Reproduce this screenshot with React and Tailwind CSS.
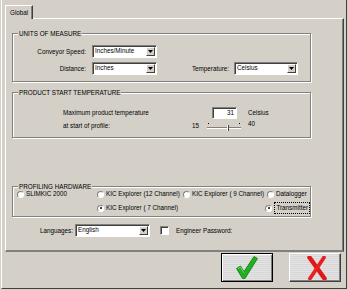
import React from 'react';

const Select = ({ value, className }) => (
  <div className={`flex h-[13px] items-center bg-white border border-[#808080] border-r-white border-b-white shadow-[inset_1px_1px_0_#404040] ${className}`}>
    <span className="flex-1 pl-[2px] leading-none">{value}</span>
    <span className="mr-px flex h-[9px] w-[9px] items-center justify-center border border-white border-r-[#404040] border-b-[#404040] bg-[#d4d0c8]">
      <svg width="5" height="3" viewBox="0 0 5 3">
        <path d="M0 0h5L2.5 3z" fill="#000" />
      </svg>
    </span>
  </div>
);

const Radio = ({ checked, label, className, focus }) => (
  <div className={`flex items-center ${className}`}>
    <span className="flex h-[7px] w-[7px] items-center justify-center rounded-full border border-[#808080] border-r-white border-b-white bg-white">
      {checked && <span className="h-[2px] w-[2px] rounded-full bg-black" />}
    </span>
    <span className={`ml-[2px] leading-none ${focus ? 'border border-dotted border-black px-px py-[2px]' : ''}`}>{label}</span>
  </div>
);

const Group = ({ title, className, children }) => (
  <div className={`relative ml-[6px] w-[299px] border border-[#808080] shadow-[inset_1px_1px_0_#fff,1px_1px_0_#fff] ${className}`}>
    <span className="absolute left-[5px] top-[-4px] bg-[#d4d0c8] px-px leading-[7px]">{title}</span>
    {children}
  </div>
);

export default function App() {
  return (
    <div className="h-[290px] w-[348px] overflow-hidden bg-[#d4d0c8] pl-px font-['Liberation_Sans',Arial,sans-serif] text-[6.3px] text-black">
      <div className="flex h-[289px] w-[346px] flex-col border-l border-r border-b border-white border-r-[#404040] border-b-[#404040] pl-[3px] pt-[5px]">
        {/* tab */}
        <div className="relative z-10 -mb-px flex h-[14px] w-[28px] items-center border border-b-0 border-white border-r-[#404040] bg-[#d4d0c8] pl-[4px] shadow-[inset_-1px_0_0_#808080]">
          Global
        </div>

        {/* panel */}
        <div className="flex h-[234px] w-[339px] flex-col border border-white border-r-[#404040] border-b-2 border-b-[#808080] shadow-[inset_-1px_0_0_#808080]">
          <Group title="UNITS OF MEASURE" className="mt-[14px] h-[49px] pt-[11px]">
            <div className="flex h-[13px] items-center">
              <span className="w-[73px] text-right">Conveyor Speed:</span>
              <Select value="Inches/Minute" className="ml-[6px] w-[65px]" />
            </div>
            <div className="mt-[4px] flex h-[13px] items-center">
              <span className="w-[73px] text-right">Distance:</span>
              <Select value="Inches" className="ml-[6px] w-[65px]" />
              <span className="w-[72px] text-right">Temperature:</span>
              <Select value="Celsius" className="ml-[5px] w-[64px]" />
            </div>
          </Group>

          <Group title="PRODUCT START TEMPERATURE" className="mt-[10px] h-[46px] pl-[50px] pt-[14px]">
            <div className="flex h-[12px] items-center">
              <span className="w-[149px]">Maximum product temperature</span>
              <span className="flex h-[12px] w-[25px] items-center justify-end border border-[#808080] border-r-white border-b-white bg-white pr-[2px] shadow-[inset_1px_1px_0_#404040]">
                31
              </span>
              <span className="ml-[11px]">Celsius</span>
            </div>
            <div className="mt-px flex h-[12px] items-center">
              <span className="w-[129px]">at start of profile:</span>
              <span className="w-[15px]">15</span>
              <div className="relative h-[12px] w-[34px]">
                <span className="absolute left-[1px] top-[3px] h-px w-px bg-black" />
                <span className="absolute right-[1px] top-[3px] h-px w-px bg-black" />
                <span className="absolute left-0 top-[7px] h-[2px] w-[34px] border-t border-[#808080] border-b border-b-white" />
                <span className="absolute left-[20px] top-[5px] h-[6px] w-[2px] border-l border-white border-r border-r-[#404040] bg-[#d4d0c8]" />
              </div>
              <span className="-mt-[4px] ml-[7px]">40</span>
            </div>
          </Group>

          <Group title="PROFILING HARDWARE" className="mt-[48px] h-[31px] pl-[4px] pt-[3px]">
            <div className="flex h-[8px] items-center">
              <Radio label="SLIMKIC 2000" className="w-[80px]" />
              <Radio label="KIC Explorer (12 Channel)" className="w-[86px]" />
              <Radio label="KIC Explorer ( 9 Channel)" className="w-[84px]" />
              <Radio label="Datalogger" />
            </div>
            <div className="mt-[6px] flex h-[8px] items-center">
              <Radio checked label="KIC Explorer ( 7 Channel)" className="ml-[80px] w-[170px]" />
              <Radio checked focus label="Transmitter" />
            </div>
          </Group>

          <div className="mt-[7px] flex h-[13px] items-center">
            <span className="w-[67px] text-right">Languages:</span>
            <Select value="English" className="ml-[2px] w-[75px]" />
            <span className="ml-[10px] h-[9px] w-[9px] border border-[#808080] border-r-white border-b-white bg-white shadow-[inset_1px_1px_0_#404040]" />
            <span className="ml-[7px]">Engineer Password:</span>
          </div>
        </div>

        {/* buttons */}
        <div className="mt-px flex justify-end gap-[16px] pr-[5px]">
          <button className="flex h-[29px] w-[52px] items-center justify-center border border-black bg-[repeating-linear-gradient(0deg,#d6d6d6_0px,#d6d6d6_1px,#e4e4e4_1px,#e4e4e4_2px)] shadow-[inset_1px_1px_0_#fff,inset_-1px_-1px_0_#808080]">
            <svg width="22" height="23" viewBox="0 0 22 23">
              <path d="M0.5 12.5 L4.5 10 L8 15.5 L18 0.5 L21.5 2.5 L9 22.5 L6.5 22.5 Z" fill="#22b022" stroke="#0d7a0d" strokeWidth="0.8" strokeLinejoin="round" />
              <path d="M2 12.5 L4.5 11.2 L8 16.8" fill="none" stroke="#7fe07f" strokeWidth="0.8" />
            </svg>
          </button>
          <button className="flex h-[29px] w-[52px] items-center justify-center border border-white border-r-[#404040] border-b-[#404040] bg-[repeating-linear-gradient(0deg,#d6d6d6_0px,#d6d6d6_1px,#e4e4e4_1px,#e4e4e4_2px)] pl-[4px] shadow-[inset_-1px_-1px_0_#808080]">
            <svg width="20" height="24" viewBox="0 0 20 24">
              <path d="M2.5 1.5 L17.5 22.5" stroke="#e01818" strokeWidth="4.5" strokeLinecap="round" />
              <path d="M17 1.5 L3 22.5" stroke="#e82020" strokeWidth="3.8" strokeLinecap="round" />
            </svg>
          </button>
        </div>
      </div>
    </div>
  );
}
